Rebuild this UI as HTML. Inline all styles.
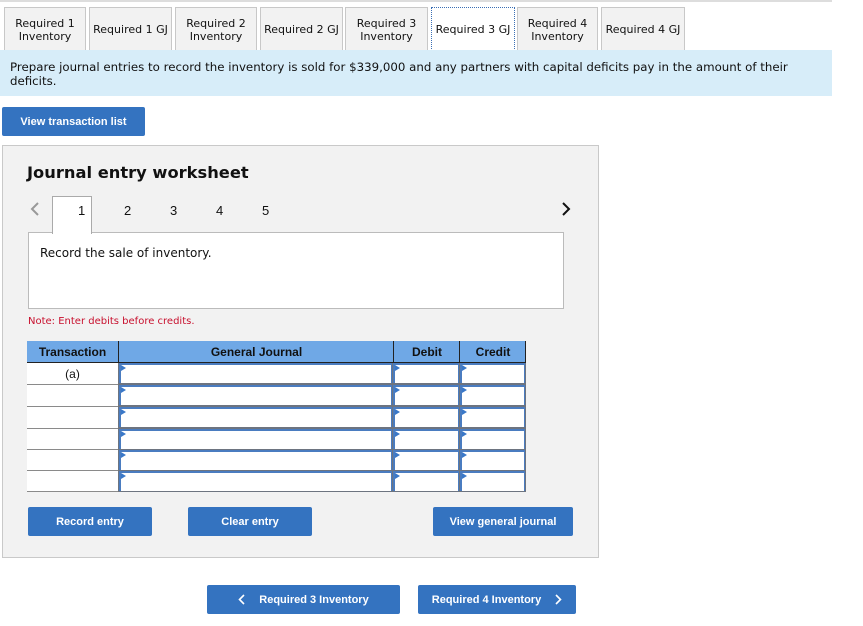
<!DOCTYPE html>
<html><head><meta charset="utf-8"><style>
*{box-sizing:border-box;margin:0;padding:0}
body{width:863px;height:626px;background:#fff;font-family:Verdana,"DejaVu Sans",sans-serif;position:relative;overflow:hidden;color:#111}
.a{position:absolute}
.tab{position:absolute;top:7px;height:44px;background:#f2f2f2;border:1px solid #c8c8c8;border-bottom:none;font-size:11px;line-height:13px;text-align:center;display:flex;align-items:center;justify-content:center}
.btn{position:absolute;background:#3473c0;color:#fff;font-family:"Liberation Sans",Arial,sans-serif;font-weight:bold;font-size:11px;border-radius:2px;display:flex;align-items:center;justify-content:center}
.num{position:absolute;top:203px;font-family:"Liberation Sans",Arial,sans-serif;font-size:13px}
.cell{position:absolute;background:#fff;border:2px solid #4a7cc0;border-right-width:1px;border-bottom:none}
.cell:after{content:"";position:absolute;left:0;top:0;border-left:5px solid #3a78c8;border-top:3px solid transparent;border-bottom:3px solid transparent}
.tr{position:absolute;left:27px;width:91px;height:22px;background:#fff;border-bottom:1px solid #8a8a8a}
</style></head><body>
<div class="a" style="left:0;top:0;width:832px;height:2px;background:#ddd"></div>
<div class="tab" style="left:4px;width:82px">Required 1<br>Inventory</div>
<div class="tab" style="left:89px;width:83px">Required 1 GJ</div>
<div class="tab" style="left:175px;width:82px">Required 2<br>Inventory</div>
<div class="tab" style="left:260px;width:83px">Required 2 GJ</div>
<div class="tab" style="left:345px;width:83px">Required 3<br>Inventory</div>
<div class="tab" style="left:431px;width:84px;background:#fff;border:1px dotted #3a6fb5;border-bottom:none">Required 3 GJ</div>
<div class="tab" style="left:517px;width:81px">Required 4<br>Inventory</div>
<div class="tab" style="left:601px;width:84px">Required 4 GJ</div>
<div class="a" style="left:0;top:50px;width:832px;height:46px;background:#d7edf9;padding:10px 40px 10px 10px;font-size:11.8px;line-height:14px">Prepare journal entries to record the inventory is sold for $339,000 and any partners with capital deficits pay in the amount of their deficits.</div>
<div class="btn" style="left:2px;top:107px;width:143px;height:29px">View transaction list</div>

<div class="a" style="left:2px;top:145px;width:597px;height:413px;background:#f2f2f2;border:1px solid #c9c9c9"></div>
<div class="a" style="left:27px;top:163px;font-size:16.3px;font-weight:bold">Journal entry worksheet</div>
<svg class="a" style="left:30px;top:202px" width="10" height="14"><path d="M8 1 L2 7 L8 13" fill="none" stroke="#999" stroke-width="2"/></svg>
<svg class="a" style="left:561px;top:202px" width="10" height="14"><path d="M2 1 L8 7 L2 13" fill="none" stroke="#111" stroke-width="2"/></svg>
<div class="a" style="left:52px;top:196px;width:40px;height:38px;background:#fff;border:1px solid #aaa;border-bottom:none;z-index:2"></div>
<div class="num" style="left:78px;z-index:3">1</div>
<div class="num" style="left:124px">2</div>
<div class="num" style="left:170px">3</div>
<div class="num" style="left:216px">4</div>
<div class="num" style="left:262px">5</div>
<div class="a" style="left:28px;top:232px;width:536px;height:77px;background:#fff;border:1px solid #bbb;padding:13px 11px;font-size:12px">Record the sale of inventory.</div>
<div class="a" style="left:28px;top:316px;font-size:10px;color:#c8102e">Note: Enter debits before credits.</div>

<div class="a" style="left:27px;top:341px;width:499px;height:23px;background:#6fa8e6;border-bottom:2px solid #222;font-family:'Liberation Sans',sans-serif;font-weight:bold;font-size:12px">
<div class="a" style="left:0;width:91px;top:4px;text-align:center">Transaction</div>
<div class="a" style="left:91px;width:1px;height:22px;background:#222"></div>
<div class="a" style="left:92px;width:275px;top:4px;text-align:center">General Journal</div>
<div class="a" style="left:366px;width:1px;height:22px;background:#222"></div>
<div class="a" style="left:367px;width:66px;top:4px;text-align:center">Debit</div>
<div class="a" style="left:432px;width:1px;height:22px;background:#222"></div>
<div class="a" style="left:433px;width:66px;top:4px;text-align:center">Credit</div>
<div class="a" style="left:498px;width:1px;height:22px;background:#222"></div>
</div>
<div class="a" style="left:118px;top:363px;width:408px;height:129px;background:#6d7480"></div>
<div class="tr" style="top:363px;text-align:center;font-family:'Liberation Sans',sans-serif;font-size:12px;padding-top:4px">(a)</div>
<div class="tr" style="top:385px"></div><div class="tr" style="top:407px"></div><div class="tr" style="top:429px;height:21px"></div><div class="tr" style="top:450px;height:21px"></div><div class="tr" style="top:471px;height:21px"></div>

<div class="cell" style="left:119px;top:363px;width:273px;height:20px"></div><div class="cell" style="left:393px;top:363px;width:66px;height:20px"></div><div class="cell" style="left:460px;top:363px;width:65px;height:20px"></div>
<div class="cell" style="left:119px;top:385px;width:273px;height:20px"></div><div class="cell" style="left:393px;top:385px;width:66px;height:20px"></div><div class="cell" style="left:460px;top:385px;width:65px;height:20px"></div>
<div class="cell" style="left:119px;top:407px;width:273px;height:20px"></div><div class="cell" style="left:393px;top:407px;width:66px;height:20px"></div><div class="cell" style="left:460px;top:407px;width:65px;height:20px"></div>
<div class="cell" style="left:119px;top:429px;width:273px;height:20px"></div><div class="cell" style="left:393px;top:429px;width:66px;height:20px"></div><div class="cell" style="left:460px;top:429px;width:65px;height:20px"></div>
<div class="cell" style="left:119px;top:450px;width:273px;height:20px"></div><div class="cell" style="left:393px;top:450px;width:66px;height:20px"></div><div class="cell" style="left:460px;top:450px;width:65px;height:20px"></div>
<div class="cell" style="left:119px;top:471px;width:273px;height:20px"></div><div class="cell" style="left:393px;top:471px;width:66px;height:20px"></div><div class="cell" style="left:460px;top:471px;width:65px;height:20px"></div>

<div class="btn" style="left:28px;top:507px;width:124px;height:29px">Record entry</div>
<div class="btn" style="left:188px;top:507px;width:124px;height:29px">Clear entry</div>
<div class="btn" style="left:433px;top:507px;width:140px;height:29px">View general journal</div>
<div class="btn" style="left:207px;top:585px;width:193px;height:29px"><svg width="7" height="11" style="margin-right:14px"><path d="M6 1 L1.5 5.5 L6 10" fill="none" stroke="#fff" stroke-width="1.6"/></svg>Required 3 Inventory</div>
<div class="btn" style="left:418px;top:585px;width:158px;height:29px">Required 4 Inventory<svg width="7" height="11" style="margin-left:14px"><path d="M1 1 L5.5 5.5 L1 10" fill="none" stroke="#fff" stroke-width="1.6"/></svg></div>
</body></html>
